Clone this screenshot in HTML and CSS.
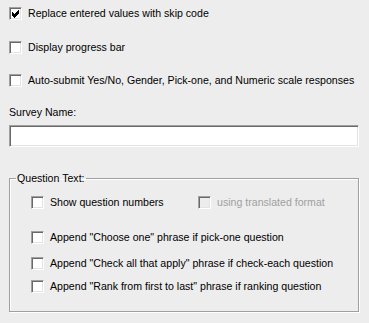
FILE: index.html
```
<!DOCTYPE html>
<html>
<head>
<meta charset="utf-8">
<link rel="stylesheet" href="styles.css">
</head>
<body>
<div class="page">
  <div class="opt opt1"><span class="cb"><svg width="9" height="9" viewBox="0 0 9 9"><path d="M1 3.5 L3.5 6 L8 1.5 M1 4.5 L3.5 7 L8 2.5 M1 5.5 L3.5 8 L8 3.5" stroke="#000" stroke-width="1" fill="none" shape-rendering="crispEdges"/></svg></span><span class="lbl">Replace entered values with skip code</span></div>
  <div class="opt opt2"><span class="cb"></span><span class="lbl">Display progress bar</span></div>
  <div class="opt opt3"><span class="cb"></span><span class="lbl">Auto-submit Yes/No, Gender, Pick-one, and Numeric scale responses</span></div>
  <div class="field-label">Survey Name:</div>
  <div class="textbox"></div>
  <fieldset class="group">
    <legend>Question Text:</legend>
    <div class="opt g1">
      <span class="main"><span class="cb"></span><span class="lbl">Show question numbers</span></span>
      <span class="sub"><span class="cb dis"></span><span class="lbl dis-txt">using translated format</span></span>
    </div>
    <div class="opt g2"><span class="cb"></span><span class="lbl">Append "Choose one" phrase if pick-one question</span></div>
    <div class="opt g3"><span class="cb"></span><span class="lbl">Append "Check all that apply" phrase if check-each question</span></div>
    <div class="opt g4"><span class="cb"></span><span class="lbl">Append "Rank from first to last" phrase if ranking question</span></div>
  </fieldset>
</div>
</body>
</html>
```
FILE: styles.css
```
html, body {
  margin: 0;
  padding: 0;
  background: #ededed;
}
.page {
  width: 369px;
  height: 323px;
  box-sizing: border-box;
  padding: 0 10px 0 9px;
  font-family: "Liberation Sans", Arial, sans-serif;
  font-size: 10.6px;
  color: #000;
  display: flex;
  flex-direction: column;
  overflow: hidden;
}
.opt {
  display: flex;
  align-items: center;
  height: 13px;
  line-height: 13px;
  white-space: nowrap;
}
.opt1 { margin-top: 7px; }
.opt2 { margin-top: 21px; }
.opt3 { margin-top: 20px; }
.cb {
  width: 13px;
  height: 13px;
  box-sizing: border-box;
  flex: none;
  background: #fff;
  border-style: solid;
  border-width: 1px;
  border-color: #a0a0a0 #fff #fff #a0a0a0;
  box-shadow: inset 1px 1px 0 #696969, inset -1px -1px 0 #e3e3e3;
  display: flex;
  align-items: center;
  justify-content: center;
}
.cb svg { display: block; }
.cb.dis {
  background: #ededed;
}
.lbl {
  margin-left: 6px;
}
.dis-txt { color: #a0a0a0; }
.field-label {
  margin-top: 19px;
  height: 13px;
  line-height: 13px;
}
.textbox {
  margin-top: 6px;
  height: 22px;
  box-sizing: border-box;
  background: #fff;
  border-style: solid;
  border-width: 1px;
  border-color: #a0a0a0 #fff #fff #a0a0a0;
  box-shadow: inset 1px 1px 0 #696969, inset -1px -1px 0 #e3e3e3;
}
.group {
  margin: 25px 0 0 0;
  padding: 0 0 18px 0;
  border: 1px solid #a0a0a0;
  box-shadow: 1px 1px 0 #fff, inset 1px 1px 0 #fff;
  min-width: 0;
}
.group legend {
  margin-left: 6px;
  padding: 0 1px;
  line-height: 13px;
  height: 13px;
}
.group .opt { padding-left: 21px; }
.g1 { margin-top: 11px; }
.g2 { margin-top: 22px; }
.g3 { margin-top: 13px; }
.g4 { margin-top: 10px; }
.main {
  display: flex;
  align-items: center;
  width: 167px;
}
.sub {
  display: flex;
  align-items: center;
}
```
